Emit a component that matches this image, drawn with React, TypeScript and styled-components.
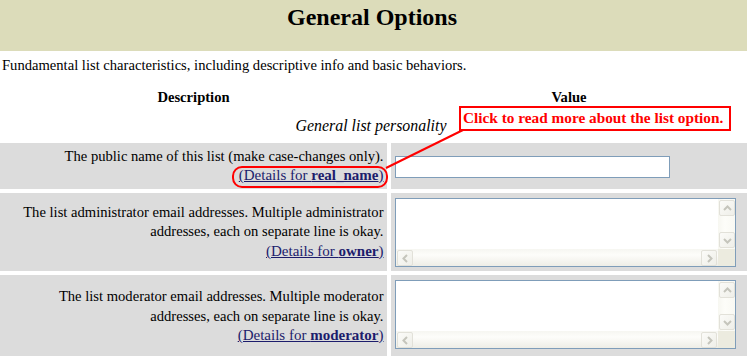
import { createGlobalStyle } from 'styled-components'
import styled from 'styled-components'

const GlobalStyle = createGlobalStyle`
  html, body {
    margin: 0;
    padding: 0;
    background: #ffffff;
  }
`

const Page = styled.div`
  position: relative;
  width: 747px;
  height: 356px;
  overflow: hidden;
  font-family: 'Liberation Serif', 'Times New Roman', serif;
  color: #000000;
  font-size: 14.6px;
  line-height: 19.5px;
`

const TitleBar = styled.div`
  height: 51px;
  background: #dcdcba;
`

const Title = styled.h1`
  margin: 0;
  font-family: inherit;
  font-size: 24px;
  font-weight: 700;
  line-height: 34px;
  text-align: center;
  padding-right: 3px;
`

const Intro = styled.p`
  margin: 5px 0 0 2px;
`

const Columns = styled.div`
  display: grid;
  grid-template-columns: 387px 1fr;
  column-gap: 4px;
`

const HeadRow = styled(Columns)`
  margin-top: 12px;
  font-weight: 700;
  text-align: center;
`

const SectionLabel = styled.div`
  margin-top: 9px;
  font-style: italic;
  font-size: 15.9px;
  text-align: center;
  padding-right: 5px;
`

const Rows = styled.div`
  display: flex;
  flex-direction: column;
  gap: 4px;
  margin-top: 7.5px;
`

const OptionRow = styled(Columns)<{ $height: number }>`
  height: ${(p) => p.$height}px;
`

const DescCell = styled.div`
  background: #dcdcdc;
  display: flex;
  flex-direction: column;
  justify-content: center;
  align-items: flex-end;
  text-align: right;
  padding: 0 3.5px 0 6px;
`

const ValueCell = styled.div<{ $top?: boolean }>`
  background: #dcdcdc;
  display: flex;
  align-items: ${(p) => (p.$top ? 'flex-start' : 'center')};
  padding: ${(p) => (p.$top ? '5px 4px 0' : '1px 4px 0')};
`

const DetailsLink = styled.a`
  color: #1c1c6c;
  text-decoration: underline;
  font-size: 15px;
  b {
    font-weight: 700;
  }
`

const TextInput = styled.div`
  width: 275px;
  height: 22px;
  box-sizing: border-box;
  border: 1px solid #7f9db9;
  background: #ffffff;
`

const TextArea = styled.div`
  width: 341px;
  height: 69px;
  box-sizing: border-box;
  border: 1px solid #7f9db9;
  background: #ffffff;
  display: grid;
  grid-template-columns: 1fr 17px;
  grid-template-rows: 1fr 17px;
`

const VScroll = styled.div`
  background: linear-gradient(to right, #f7f7f1, #fdfdf9 40%, #f9f9f3);
  display: flex;
  flex-direction: column;
  justify-content: space-between;
  padding: 1px 0 1px 1px;
`

const HScroll = styled.div`
  background: linear-gradient(to bottom, #f6f6f1, #fdfdfa 35%, #eeede6);
  display: flex;
  justify-content: space-between;
  padding: 1px 1px 0 1px;
`

const Corner = styled.div`
  background: #ecebdf;
`

const ScrollButton = styled.div`
  width: 16px;
  height: 16px;
  box-sizing: border-box;
  border: 1px solid #e2e1d9;
  border-radius: 2px;
  background: linear-gradient(to bottom right, #fbfbf8, #efefe9);
  display: flex;
  align-items: center;
  justify-content: center;
`

const Callout = styled.div`
  position: absolute;
  left: 459px;
  top: 106px;
  width: 272px;
  height: 25px;
  box-sizing: border-box;
  border: 2px solid #ff0000;
  background: #ffffff;
  color: #ff0000;
  font-weight: 700;
  font-size: 15.3px;
  line-height: 20px;
  padding-left: 2px;
  white-space: nowrap;
`

const Markup = styled.svg`
  position: absolute;
  left: 0;
  top: 0;
  pointer-events: none;
`

const rotations = { up: 0, right: 90, down: 180, left: 270 }

function Arrow({ dir }: { dir: keyof typeof rotations }) {
  return (
    <ScrollButton>
      <svg width="9" height="9" viewBox="0 0 9 9">
        <polyline
          points="1,6 4.5,2.5 8,6"
          fill="none"
          stroke="#c5c5bc"
          strokeWidth="2"
          transform={`rotate(${rotations[dir]} 4.5 4.5)`}
        />
      </svg>
    </ScrollButton>
  )
}

function MultiLineBox() {
  return (
    <TextArea>
      <div />
      <VScroll>
        <Arrow dir="up" />
        <Arrow dir="down" />
      </VScroll>
      <HScroll>
        <Arrow dir="left" />
        <Arrow dir="right" />
      </HScroll>
      <Corner />
    </TextArea>
  )
}

export default function App() {
  return (
    <>
      <GlobalStyle />
      <Page>
        <TitleBar>
          <Title>General Options</Title>
        </TitleBar>
        <Intro>Fundamental list characteristics, including descriptive info and basic behaviors.</Intro>
        <HeadRow>
          <div>Description</div>
          <div>Value</div>
        </HeadRow>
        <SectionLabel>General list personality</SectionLabel>
        <Rows>
          <OptionRow $height={46}>
            <DescCell>
              <span>The public name of this list (make case-changes only).</span>
              <DetailsLink href="#real_name">
                (Details for <b>real_name</b>)
              </DetailsLink>
            </DescCell>
            <ValueCell>
              <TextInput />
            </ValueCell>
          </OptionRow>
          <OptionRow $height={78}>
            <DescCell>
              <span>
                The list administrator email addresses. Multiple administrator addresses, each on
                separate line is okay.
              </span>
              <DetailsLink href="#owner">
                (Details for <b>owner</b>)
              </DetailsLink>
            </DescCell>
            <ValueCell $top>
              <MultiLineBox />
            </ValueCell>
          </OptionRow>
          <OptionRow $height={83}>
            <DescCell>
              <span>
                The list moderator email addresses. Multiple moderator addresses, each on separate
                line is okay.
              </span>
              <DetailsLink href="#moderator">
                (Details for <b>moderator</b>)
              </DetailsLink>
            </DescCell>
            <ValueCell $top>
              <MultiLineBox />
            </ValueCell>
          </OptionRow>
        </Rows>
        <Markup width="747" height="356">
          <rect x="233" y="167" width="154" height="20" rx="9" fill="none" stroke="#ff0000" strokeWidth="2" />
          <line x1="386" y1="168" x2="463" y2="130" stroke="#ff0000" strokeWidth="2" />
        </Markup>
        <Callout>Click to read more about the list option.</Callout>
      </Page>
    </>
  )
}
